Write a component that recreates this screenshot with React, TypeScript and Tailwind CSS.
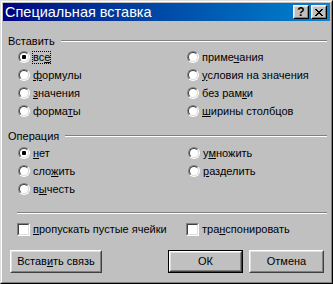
import React from 'react';

const font = { fontFamily: '"Liberation Sans", Arial, sans-serif' };

function Radio({ checked }: { checked?: boolean }) {
  return (
    <span className="block w-[12px] h-[12px] shrink-0 rounded-full border border-t-[#808080] border-l-[#808080] border-b-white border-r-white">
      <span className="flex items-center justify-center w-full h-full rounded-full border border-t-[#404040] border-l-[#404040] border-b-[#dfdfdf] border-r-[#dfdfdf] bg-white">
        {checked && <span className="block w-[4px] h-[4px] rounded-[1px] bg-black" />}
      </span>
    </span>
  );
}

function Check() {
  return (
    <span className="block w-[13px] h-[13px] shrink-0 border border-t-[#808080] border-l-[#808080] border-b-white border-r-white">
      <span className="block w-full h-full border border-t-[#404040] border-l-[#404040] border-b-[#dfdfdf] border-r-[#dfdfdf] bg-white" />
    </span>
  );
}

function Option({ children, checked, focus }: { children: React.ReactNode; checked?: boolean; focus?: boolean }) {
  return (
    <div className="flex items-center h-[18px]">
      <Radio checked={checked} />
      <span
        className={
          'ml-[2px] leading-[11px] border border-dotted whitespace-nowrap ' +
          (focus ? 'border-black' : 'border-transparent')
        }
      >
        {children}
      </span>
    </div>
  );
}

function Group({ title }: { title: string }) {
  return (
    <div className="flex items-center h-[14px]">
      <span>{title}</span>
      <div className="flex-1 ml-[6px] h-[2px] border-t border-t-[#808080] border-b border-b-white" />
    </div>
  );
}

function Button({ children, isDefault, width }: { children: React.ReactNode; isDefault?: boolean; width: string }) {
  const inner = (
    <span className="flex w-full h-full border border-t-white border-l-white border-b-[#404040] border-r-[#404040]">
      <span className="flex items-center justify-center w-full h-full border border-t-[#dfdfdf] border-l-[#dfdfdf] border-b-[#808080] border-r-[#808080]">
        {children}
      </span>
    </span>
  );
  return (
    <div className={width + ' h-[23px] ' + (isDefault ? 'border border-black' : '')}>{inner}</div>
  );
}

function CaptionButton({ children }: { children: React.ReactNode }) {
  return (
    <div className="w-[16px] h-[14px] bg-[#c0c0c0] border border-t-white border-l-white border-b-black border-r-black">
      <div className="flex items-center justify-center w-full h-full border border-t-[#dfdfdf] border-l-[#dfdfdf] border-b-[#808080] border-r-[#808080]">
        {children}
      </div>
    </div>
  );
}

export default function App() {
  return (
    <div className="w-[333px] h-[284px] bg-[#c0c0c0] text-black text-[11px]" style={font}>
      <div className="w-full h-full border border-t-[#dfdfdf] border-l-[#dfdfdf] border-b-black border-r-black">
        <div className="w-full h-full border border-t-white border-l-white border-b-[#808080] border-r-[#808080] p-[1px] flex flex-col">
          {/* title bar */}
          <div className="h-[18px] flex items-center bg-gradient-to-r from-[#000080] to-[#1084d0] pl-[2px] pr-[3px]">
            <span className="flex-1 text-white text-[14.5px] leading-[18px] whitespace-nowrap">Специальная вставка</span>
            <div className="flex gap-[2px]">
              <CaptionButton>
                <span className="text-[12px] font-bold leading-none">?</span>
              </CaptionButton>
              <CaptionButton>
                <svg width="8" height="7" viewBox="0 0 8 7" shapeRendering="crispEdges">
                  <path
                    d="M0 0h2v1h-2zM6 0h2v1h-2zM1 1h2v1h-2zM5 1h2v1h-2zM2 2h4v1h-4zM3 3h2v1h-2zM2 4h4v1h-4zM1 5h2v1h-2zM5 5h2v1h-2zM0 6h2v1h-2zM6 6h2v1h-2z"
                    fill="black"
                  />
                </svg>
              </CaptionButton>
            </div>
          </div>

          {/* body */}
          <div className="flex flex-col pl-[5px] pr-[3px]">
            <div className="mt-[13px]">
              <Group title="Вставить" />
            </div>
            <div className="grid grid-cols-[169px_1fr] pl-[10px]">
              <Option checked focus>
                вс<u>е</u>
              </Option>
              <Option>
                приме<u>ч</u>ания
              </Option>
              <Option>
                <u>ф</u>ормулы
              </Option>
              <Option>
                <u>у</u>словия на значения
              </Option>
              <Option>
                <u>з</u>начения
              </Option>
              <Option>
                без рам<u>к</u>и
              </Option>
              <Option>
                форма<u>т</u>ы
              </Option>
              <Option>
                <u>ш</u>ирины столбцов
              </Option>
            </div>

            <div className="mt-[9px]">
              <Group title="Операция" />
            </div>
            <div className="grid grid-cols-[170px_1fr] pl-[10px] mt-[1px]">
              <Option checked>
                <u>н</u>ет
              </Option>
              <Option>
                у<u>м</u>ножить
              </Option>
              <Option>
                сло<u>ж</u>ить
              </Option>
              <Option>
                <u>р</u>азделить
              </Option>
              <Option>
                в<u>ы</u>честь
              </Option>
            </div>

            <div className="mt-[14px] ml-[9px] h-[2px] border-t border-t-[#808080] border-b border-b-white" />

            <div className="grid grid-cols-[169px_1fr] pl-[9px] mt-[6px]">
              <div className="flex items-center h-[18px]">
                <Check />
                <span className="ml-[3px] whitespace-nowrap">
                  <u>п</u>ропускать пустые ячейки
                </span>
              </div>
              <div className="flex items-center h-[18px]">
                <Check />
                <span className="ml-[3px] whitespace-nowrap">
                  тра<u>н</u>спонировать
                </span>
              </div>
            </div>

            <div className="flex justify-between items-center mt-[12px] pl-[2px] pr-[3px]">
              <Button width="w-[92px]">
                Встав<u>и</u>ть связь
              </Button>
              <div className="flex gap-[6px]">
                <Button width="w-[75px]" isDefault>
                  ОК
                </Button>
                <Button width="w-[75px]">Отмена</Button>
              </div>
            </div>
          </div>
        </div>
      </div>
    </div>
  );
}
